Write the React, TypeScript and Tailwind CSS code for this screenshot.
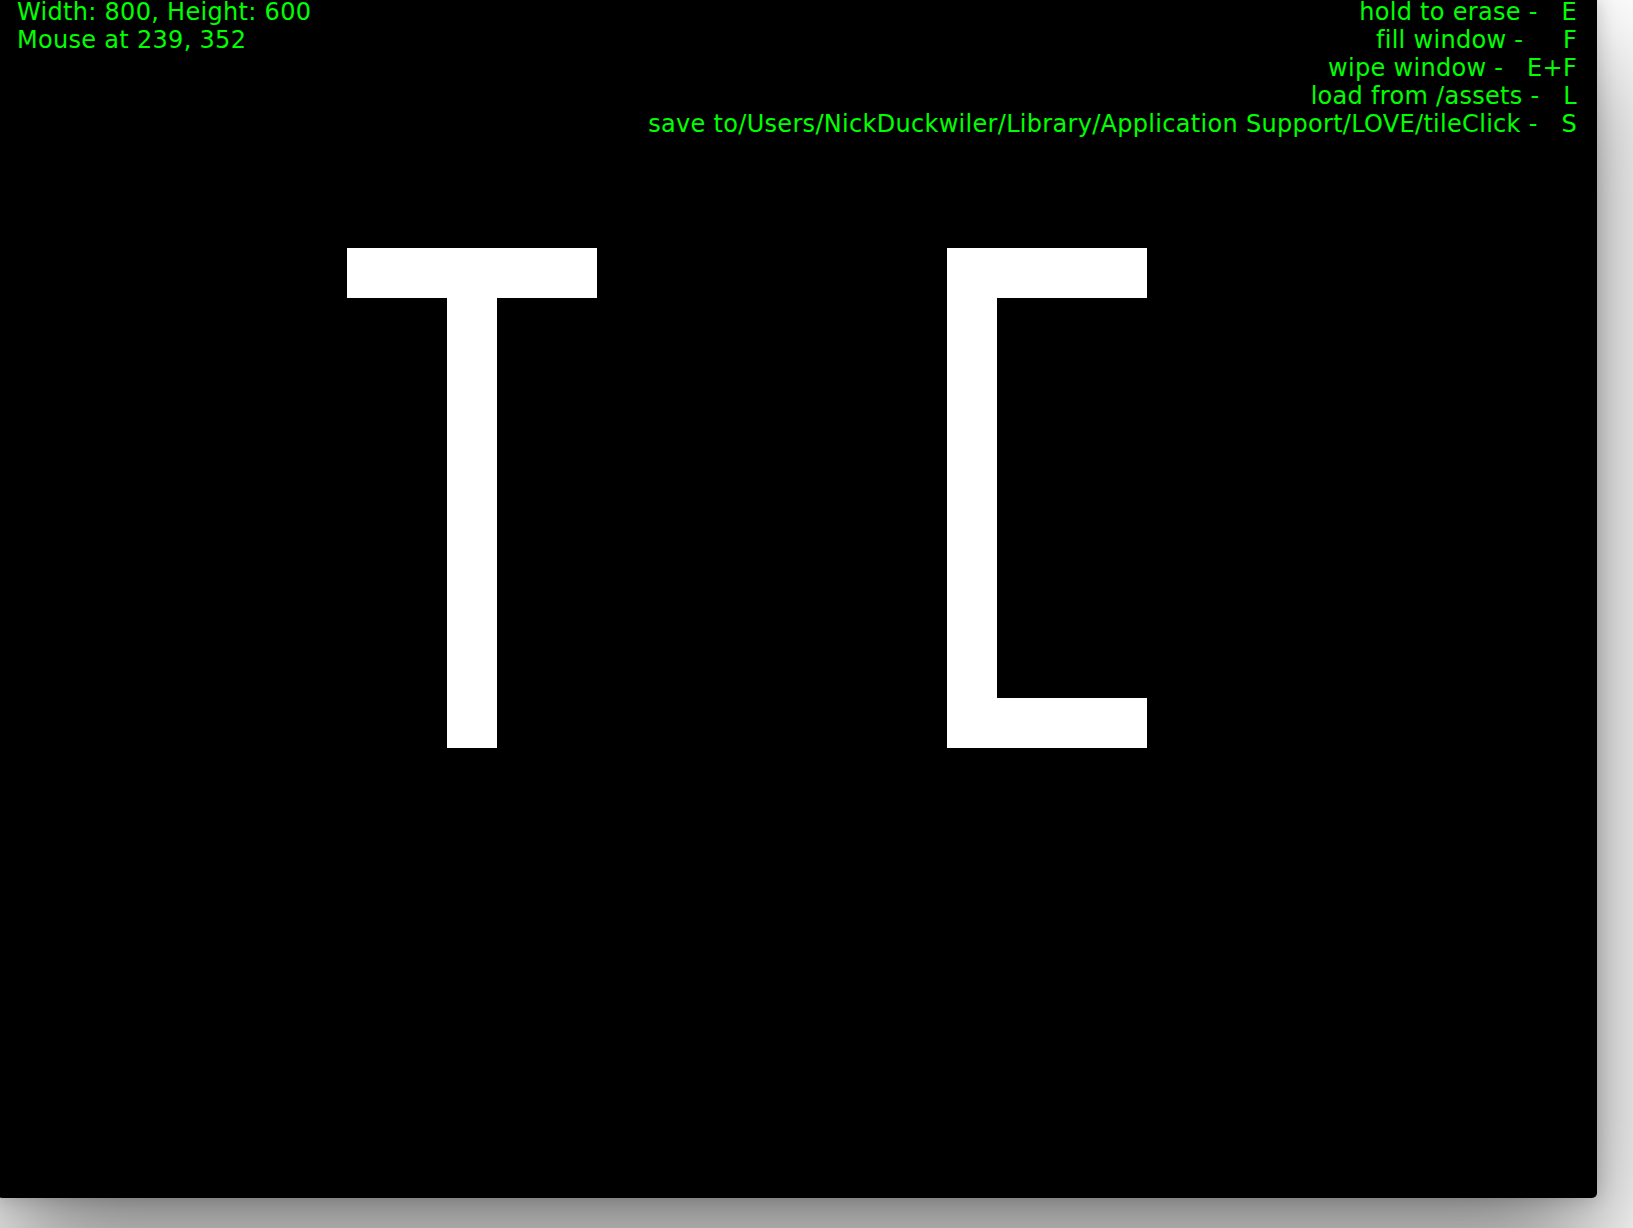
import React from "react";

const TILE = 50;

// cells as [col, row] on the 32x24 grid of the game window
const tiles: [number, number][] = [];
// T
for (let c = 7; c <= 11; c++) tiles.push([c, 5]);
for (let r = 6; r <= 14; r++) tiles.push([9, r]);
// C
for (let c = 19; c <= 22; c++) tiles.push([c, 5]);
for (let r = 6; r <= 13; r++) tiles.push([19, r]);
for (let c = 19; c <= 22; c++) tiles.push([c, 14]);

const keys = [
  "hold to erase -   E",
  "fill window -     F",
  "wipe window -   E+F",
  "load from /assets -   L",
  "save to/Users/NickDuckwiler/Library/Application Support/LOVE/tileClick -   S",
];

const App: React.FC = () => {
  return (
    <div className="w-full h-[1228px] bg-white overflow-hidden">
      <div className="relative -ml-[3px] -mt-[2px] w-[1600px] h-[1200px] bg-black rounded-b-[5px] shadow-[0_60px_120px_rgba(0,0,0,0.5),0_0_20px_rgba(0,0,0,0.2)]">
        <div className="absolute inset-0 grid grid-cols-[repeat(32,50px)] grid-rows-[repeat(24,50px)]">
          {tiles.map(([c, r]) => (
            <div
              key={`${c}-${r}`}
              className="bg-white"
              style={{ gridColumnStart: c + 1, gridRowStart: r + 1, width: TILE, height: TILE }}
            />
          ))}
        </div>

        <div className="relative flex justify-between items-start px-[20px] -mt-[1px] font-['DejaVu_Sans',sans-serif] text-[24px] leading-[28px] tracking-[0.3px] text-[#00ff00]">
          <div className="flex flex-col whitespace-pre">
            <span>Width: 800, Height: 600</span>
            <span>Mouse at 239, 352</span>
          </div>
          <div className="flex flex-col items-end whitespace-pre">
            {keys.map((k) => (
              <span key={k}>{k}</span>
            ))}
          </div>
        </div>
      </div>
    </div>
  );
};

export default App;
